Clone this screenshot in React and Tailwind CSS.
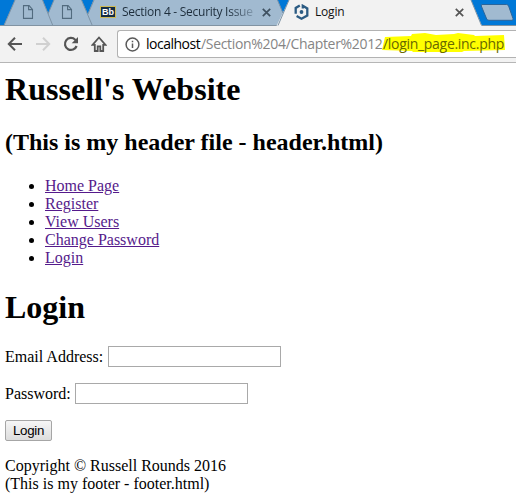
import React from "react";

const links = ["Home Page", "Register", "View Users", "Change Password", "Login"];

function PageIcon() {
  return (
    <svg width="12" height="14" viewBox="0 0 12 14" fill="none" stroke="#526b7f" strokeWidth="1.1">
      <path d="M1.500 .6h5.600L10.500 4.400v9H1.500z" />
      <path d="M6.600 .6v4h4" />
    </svg>
  );
}

function TabShapes() {
  return (
    <svg className="absolute inset-0" width="516" height="26" viewBox="0 0 516 26">
      <rect width="516" height="26" fill="#0078d7" />
      <path d="M93.5 0H277.5L288 26H83z" fill="#a1bad0" />
      <path d="M94 0L88 14" stroke="#7d93a6" fill="none" />
      <path d="M54 0H81.5L93 26H43z" fill="#a1bad0" />
      <path d="M54 0L48 14M81.5 0L92.5 26" stroke="#7d93a6" fill="none" />
      <path d="M15 0H42.5L53.5 26H3.500z" fill="#a1bad0" />
      <path d="M15 0L4 25.500M42.500 0L53 26" stroke="#7d93a6" fill="none" />
      <path d="M277.500 0L283 13" stroke="#7d93a6" fill="none" />
      <path d="M0 25.500H277M482 25.500H516" stroke="#8193a2" fill="none" />
      <path d="M289 0H471L482 26H276.500z" fill="#f2f2f2" />
      <path d="M289 0L278 25.500M471 0L481.500 25.500" stroke="#7d93a6" fill="none" />
      <path d="M482 4.500H506.500Q508 4.500 508.600 6L513 18.500Q513.500 20.300 512 20.300H489Q487.300 20.300 486.700 19L481.300 6Q481 4.500 482 4.500z" fill="#a1bad0" stroke="#2a659b" />
    </svg>
  );
}

function Close({ color }) {
  return (
    <svg width="9" height="9" viewBox="0 0 9 9" stroke={color} strokeWidth="1.7">
      <path d="M.8 .8l7.400 7.400M8.200 .8L.8 8.200" />
    </svg>
  );
}

function TabStrip() {
  return (
    <div className="relative h-[26px] overflow-hidden">
      <TabShapes />
      <div className="relative flex h-6 items-center font-['Open_Sans','Noto_Sans',sans-serif] text-[12px] leading-4">
        <div className="ml-[22px] w-[39px]"><PageIcon /></div>
        <div className="w-[39px]"><PageIcon /></div>
        <div className="flex h-3 w-4 items-center justify-center border border-[#cdb955] bg-[#142c44] font-['Liberation_Sans',sans-serif] text-[9px] font-bold text-white">Bb</div>
        <div className="ml-[6px] w-[133px] overflow-hidden whitespace-nowrap bg-gradient-to-r from-[#1d2d3b] from-80% to-[#8aa2b7] bg-clip-text tracking-[-0.27px] text-transparent">Section 4 - Security Issue</div>
        <div className="ml-[7px] w-[32px]"><Close color="#3f5161" /></div>
        <svg width="15" height="16" viewBox="0 0 15 16" fill="none" stroke="#2b5b83" strokeWidth="2.300">
          <path d="M5.800 1.500L1.700 4v5.800M2.600 12L7.500 14.700l5.800-3.200V4.500L8.800 1.800V4.600" />
          <circle cx="7.500" cy="8" r="1.900" fill="#2b5b83" stroke="none" />
        </svg>
        <span className="ml-[6px] w-[140px] tracking-[-0.2px] text-[#111]">Login</span>
        <Close color="#555" />
      </div>
    </div>
  );
}

function Toolbar() {
  return (
    <div className="flex h-[37px] items-center border-b border-[#b6b6b6] bg-[#f2f2f2]">
      <svg className="ml-[7px]" width="16" height="16" viewBox="0 0 16 16" fill="none" stroke="#555" strokeWidth="2">
        <path d="M15 8H2.500M8 1.800L1.800 8 8 14.200" />
      </svg>
      <svg className="ml-[12px]" width="16" height="16" viewBox="0 0 16 16" fill="none" stroke="#d0d0d0" strokeWidth="2">
        <path d="M1 8h12.500M8 1.800L14.200 8 8 14.200" />
      </svg>
      <svg className="ml-[12px]" width="16" height="16" viewBox="0 0 16 16" fill="none" stroke="#555" strokeWidth="2.200">
        <path d="M13.600 10A6 6 0 1 1 12.200 3.700L13.500 5" />
        <path d="M15 1v6.300H8.700z" fill="#555" stroke="none" />
      </svg>
      <svg className="ml-[12px]" width="16" height="16" viewBox="0 0 16 16" fill="none" stroke="#555" strokeWidth="1.800">
        <path d="M8 1.500L1.500 8.800H3.800V15H6.700V10.300H9.300V15H12.200V8.800H14.500z" />
      </svg>
      <div className="ml-[10px] flex h-7 flex-1 items-center rounded-l-[3px] border border-r-0 border-[#b2b2b2] bg-white font-['Open_Sans','Noto_Sans',sans-serif] text-[14px] leading-5">
        <svg className="ml-[7px]" width="15" height="15" viewBox="0 0 15 15" fill="none" stroke="#5a5a5a" strokeWidth="1.500">
          <circle cx="7.500" cy="7.500" r="6.400" />
          <path d="M7.500 6.500v4.500M7.500 3.700v1.600" />
        </svg>
        <span className="ml-[6px] w-[55px] whitespace-nowrap tracking-[-0.5px] text-black">localhost</span>
        <span className="w-[182px] whitespace-nowrap tracking-[-0.320px] text-[#858585]">/Section%204/Chapter%2012</span>
        <span className="relative w-[122px] whitespace-nowrap tracking-[-0.300px] text-[#686800]">
          <svg className="absolute -left-px -top-px" width="124" height="20" viewBox="0 0 124 20">
            <path d="M3 4L29 3 30 1 43 0 54 2 72 1 76 0 92 2 93 3 122 2 123 17 82 18 80 19 31 19 30 18 0 17z" fill="#ffff00" />
          </svg>
          <span className="relative">/login_page.inc.php</span>
        </span>
      </div>
    </div>
  );
}

export default function App() {
  return (
    <div className="h-[499px] w-full overflow-hidden bg-white">
      <TabStrip />
      <Toolbar />
      <main className="px-[5px] pt-2 font-['Liberation_Serif',serif] text-[16px] leading-[18px] text-black">
        <h1 className="text-[32px] font-bold leading-9 tracking-[0.03px]">Russell's Website</h1>
        <h2 className="mt-[22px] text-[24px] font-bold leading-[27px]">(This is my header file - header.html)</h2>
        <ul className="mt-[21px] list-disc pl-10">
          {links.map((label) => (
            <li key={label}><a href="#" className="text-[#551a8b] underline">{label}</a></li>
          ))}
        </ul>
        <h1 className="mt-[22px] text-[32px] font-bold leading-9">Login</h1>
        <label className="mt-[21px] flex h-[21px] items-center gap-[5px]">
          Email Address:
          <input type="text" className="h-[21px] w-[173px] border border-[#a9a9a9] bg-white" />
        </label>
        <label className="mt-4 flex h-[21px] items-center gap-1">
          Password:
          <input type="password" className="h-[21px] w-[173px] border border-[#a9a9a9] bg-white" />
        </label>
        <button className="mt-4 flex h-[21px] w-[47px] items-center justify-center rounded-[2px] border border-[#a6a6a6] bg-gradient-to-b from-[#f6f6f6] to-[#dddddd] font-['Liberation_Sans',sans-serif] text-[13.330px] leading-4 tracking-[-0.3px]">Login</button>
        <p className="mt-4">Copyright © Russell Rounds 2016<br />(This is my footer - footer.html)</p>
      </main>
    </div>
  );
}
